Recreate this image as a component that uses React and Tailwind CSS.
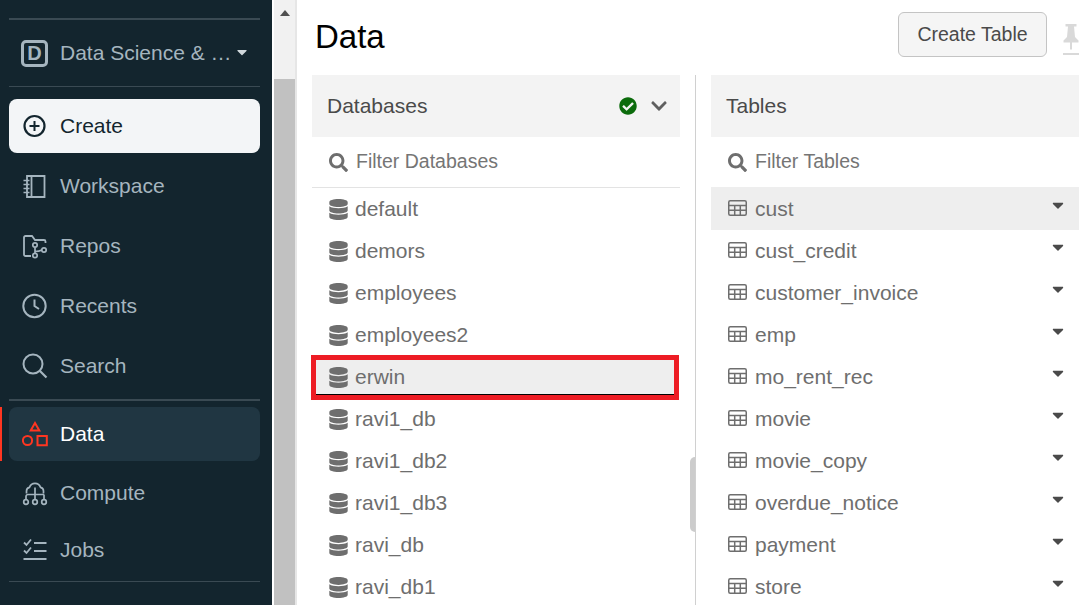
import React from 'react';
import { FaDatabase, FaSearch, FaCheckCircle, FaChevronDown, FaCaretDown } from 'react-icons/fa';

const databases = ['default', 'demors', 'employees', 'employees2', 'erwin', 'ravi1_db', 'ravi1_db2', 'ravi1_db3', 'ravi_db', 'ravi_db1'];
const tables = ['cust', 'cust_credit', 'customer_invoice', 'emp', 'mo_rent_rec', 'movie', 'movie_copy', 'overdue_notice', 'payment', 'store'];

const Icon = ({ children, className = '' }) => (
  <svg viewBox="0 0 26 26" fill="none" stroke="currentColor" strokeWidth="2" className={`w-[26px] h-[26px] shrink-0 ${className}`}>
    {children}
  </svg>
);

const CreateIcon = () => (
  <Icon>
    <circle cx="12.5" cy="13" r="10" strokeWidth="2.2" />
    <path d="M12.5 8v10M7.5 13h10" />
  </Icon>
);

const WorkspaceIcon = () => (
  <Icon>
    <path d="M5 3h17.5v21H5zM9.5 3v21" strokeWidth="1.8" />
    <path d="M1.5 7.5h6M1.5 11.5h6M1.5 15.5h6M1.5 19.5h6" strokeWidth="1.6" />
  </Icon>
);

const ReposIcon = () => (
  <Icon>
    <path d="M9 23H3.5a1.5 1.5 0 0 1-1.5-1.5V4.5A1.5 1.5 0 0 1 3.5 3H10l3 4h9a1.5 1.5 0 0 1 1.5 1.5V10" strokeWidth="1.8" />
    <circle cx="13" cy="12" r="2.2" strokeWidth="1.7" />
    <circle cx="13" cy="22.5" r="2.2" strokeWidth="1.7" />
    <circle cx="22" cy="17" r="2.2" strokeWidth="1.7" />
    <path d="M13 14.5v5.5M13 18.5c3 0 5-.5 6.8-1.5" strokeWidth="1.7" />
  </Icon>
);

const RecentsIcon = () => (
  <Icon>
    <circle cx="12.5" cy="13" r="11.2" strokeWidth="2" />
    <path d="M12.5 6.5V13l4.5 3" />
  </Icon>
);

const SearchIcon = () => (
  <Icon>
    <circle cx="11" cy="11" r="9.5" />
    <path d="M18 18l6.5 6.5" strokeWidth="2.2" />
  </Icon>
);

const DataIcon = () => (
  <Icon className="text-[#ff3621]">
    <path d="M13 2l4.3 7.5H8.7z" />
    <circle cx="5.5" cy="19.5" r="4.6" />
    <path d="M15.5 15h9.3v9.3h-9.3z" />
  </Icon>
);

const ComputeIcon = () => (
  <Icon>
    <path d="M4.5 13.5v-2.5a3.8 3.8 0 0 1 3-3.7 5.8 5.8 0 0 1 11 0 3.8 3.8 0 0 1 3 3.7v2.5" strokeWidth="1.7" />
    <path d="M13 7.5v12M4 19.5v-3a2 2 0 0 1 2-2h16M22 14.5v5" strokeWidth="1.7" />
    <circle cx="4" cy="22" r="2.3" strokeWidth="1.7" />
    <circle cx="13" cy="22" r="2.3" strokeWidth="1.7" />
    <circle cx="22" cy="22" r="2.3" strokeWidth="1.7" />
  </Icon>
);

const JobsIcon = () => (
  <Icon>
    <path d="M2 5.5l2.5 2.5L9 2.5M2 13.5l2.5 2.5L9 10.5" strokeWidth="1.8" />
    <path d="M12 6h12.5M12 14h12.5M1.5 22h23" strokeWidth="2" />
  </Icon>
);

const TableIcon = () => (
  <svg viewBox="0 0 19 16" fill="none" stroke="currentColor" strokeWidth="1.5" className="w-[19px] h-4 shrink-0 -mt-[3px]">
    <rect x="0.75" y="0.75" width="17.5" height="14.5" rx="1.5" />
    <path d="M1 5.5h17M1 10.3h17M6.7 5.5v10M12.3 5.5v10" />
  </svg>
);

const PinIcon = () => (
  <svg viewBox="0 0 16 32" fill="#d9d9d9" className="w-4 h-8">
    <path d="M2.5 0h11v2.5h-2.5l1 10.5 3.5 3.5v2H9v7H7v-7H.5v-2L4 13 5 2.5H2.5zM0 29h16v2H0z" />
  </svg>
);

const NavItem = ({ icon, label, className = 'h-[60px]' }) => (
  <div className={`flex items-center pl-[13px] gap-[12px] text-[#a5b5bf] ${className}`}>
    {icon}
    <span>{label}</span>
  </div>
);

const Divider = ({ className = '' }) => <div className={`bg-[#3a4a53] ${className}`} />;

const Sidebar = () => (
  <aside className="relative w-[272px] h-[605px] shrink-0 overflow-hidden bg-[#13252e] pl-[9px] pr-[12px] pt-[18px] text-[21px]">
    <div className="absolute left-0 top-[407px] w-[2px] h-[54px] bg-[#ff3621]" />
    <Divider className="h-[2px]" />
    <div className="flex items-center h-[66px] pl-[12px] gap-[12px] text-[#a5b5bf]">
      <div className="flex items-center justify-center w-[27px] h-[27px] rounded-[5px] border-[3px] border-[#a5b5bf] font-bold text-[20px] leading-none">D</div>
      <span className="whitespace-nowrap">Data Science &amp; …</span>
      <FaCaretDown className="w-4 h-4 -ml-[10px] -mt-[2px] text-[#d0d8dc]" />
    </div>
    <Divider className="h-px" />
    <div className="flex items-center h-[54px] mt-[12px] pl-[13px] gap-[12px] rounded-lg bg-[#f3f5f7] text-[#13252e]">
      <CreateIcon />
      <span>Create</span>
    </div>
    <NavItem icon={<WorkspaceIcon />} label="Workspace" className="h-[60px] mt-[3px]" />
    <NavItem icon={<ReposIcon />} label="Repos" />
    <NavItem icon={<RecentsIcon />} label="Recents" />
    <NavItem icon={<SearchIcon />} label="Search" />
    <Divider className="mt-[3px] h-[2px]" />
    <div className="flex items-center h-[54px] mt-[6px] pl-[13px] gap-[12px] rounded-lg bg-[#203642] text-white">
      <DataIcon />
      <span>Data</span>
    </div>
    <NavItem icon={<ComputeIcon />} label="Compute" className="h-[64px]" />
    <NavItem icon={<JobsIcon />} label="Jobs" className="h-[50px]" />
    <Divider className="mt-[6px] h-px" />
  </aside>
);

const Scrollbar = () => (
  <div className="flex flex-col w-[23px] h-[605px] shrink-0 ml-[2px] bg-[#f1f1f1] border-r-2 border-[#e6e6e6]">
    <div className="flex justify-center h-[79px] pt-[10px]">
      <div className="w-0 h-0 border-x-[5px] border-b-[6px] border-x-transparent border-b-[#505050]" />
    </div>
    <div className="flex-1 bg-[#c1c1c1]" />
  </div>
);

const PanelHeader = ({ title, children }) => (
  <div className="flex items-center justify-between h-[62px] pl-[15px] pr-[12px] bg-[#f3f3f3] text-[#4a4a4a]">
    <span>{title}</span>
    {children}
  </div>
);

const PanelFilter = ({ placeholder, className = '' }) => (
  <div className={`flex items-center pl-[17px] gap-[8px] text-[19.5px] text-[#757575] ${className}`}>
    <FaSearch className="w-[19px] h-[19px] shrink-0 text-[#6e6e6e]" />
    <span>{placeholder}</span>
  </div>
);

const DatabaseRow = ({ name }) => (
  <div className="relative flex items-center h-[42px] pl-[17px] gap-[7px] text-[#6e6e6e]">
    {name === 'erwin' && (
      <div className="absolute -left-px -top-px w-[368px] h-[45px] border-[5px] border-[#ed1c24]">
        <div className="w-full h-[35px] bg-[#eeeeee] border-b border-black" />
      </div>
    )}
    <FaDatabase className="relative w-[19px] h-[21px] shrink-0 text-[#6e6e6e]" />
    <span className="relative">{name}</span>
  </div>
);

const TableRow = ({ name, active }) => (
  <div className={`flex items-center pl-[17px] pr-[12px] gap-[8px] text-[#6e6e6e] ${active ? 'h-[43px] pt-px bg-[#eeeeee]' : 'h-[42px]'}`}>
    <TableIcon />
    <span className="flex-1">{name}</span>
    <FaCaretDown className="w-[18px] h-[18px] -mt-[8px] text-[#4a4a4a]" />
  </div>
);

export default function App() {
  return (
    <div className="flex w-[1086px] h-[605px] overflow-hidden bg-white font-['Liberation_Sans',Arial,sans-serif]">
      <Sidebar />
      <Scrollbar />
      <main className="flex-1 min-w-0 pl-[15px] pr-[7px] text-[21px]">
        <div className="flex items-start justify-between h-[75px]">
          <h1 className="mt-[16px] ml-[3px] text-[33px] leading-[42px] text-black">Data</h1>
          <div className="flex items-start mt-[12px]">
            <button className="w-[149px] h-[45px] pt-px rounded-md border border-[#c4c4c4] bg-[#f5f5f5] text-[19.5px] text-[#4a4a4a]">Create Table</button>
            <div className="ml-[16px] mt-[12px] w-4 overflow-hidden"><PinIcon /></div>
          </div>
        </div>
        <div className="flex">
          <section className="w-[368px] shrink-0">
            <PanelHeader title="Databases">
              <div className="flex items-center gap-[13px]">
                <FaCheckCircle className="w-[18px] h-[18px] text-[#0b6b0b]" />
                <FaChevronDown className="w-[18px] h-[18px] text-[#5f5f5f]" />
              </div>
            </PanelHeader>
            <PanelFilter placeholder="Filter Databases" className="h-[51px] border-b border-[#e3e3e3]" />
            {databases.map((name) => <DatabaseRow key={name} name={name} />)}
          </section>
          <div className="relative w-px ml-[15px] mr-[15px] h-[530px] bg-[#d0d0d0]">
            <div className="absolute -left-[5px] top-[382px] w-[5px] h-[75px] rounded-l-md bg-[#cccccc]" />
          </div>
          <section className="flex-1 min-w-0">
            <PanelHeader title="Tables" />
            <PanelFilter placeholder="Filter Tables" className="h-[50px]" />
            {tables.map((name) => <TableRow key={name} name={name} active={name === 'cust'} />)}
          </section>
        </div>
      </main>
    </div>
  );
}
